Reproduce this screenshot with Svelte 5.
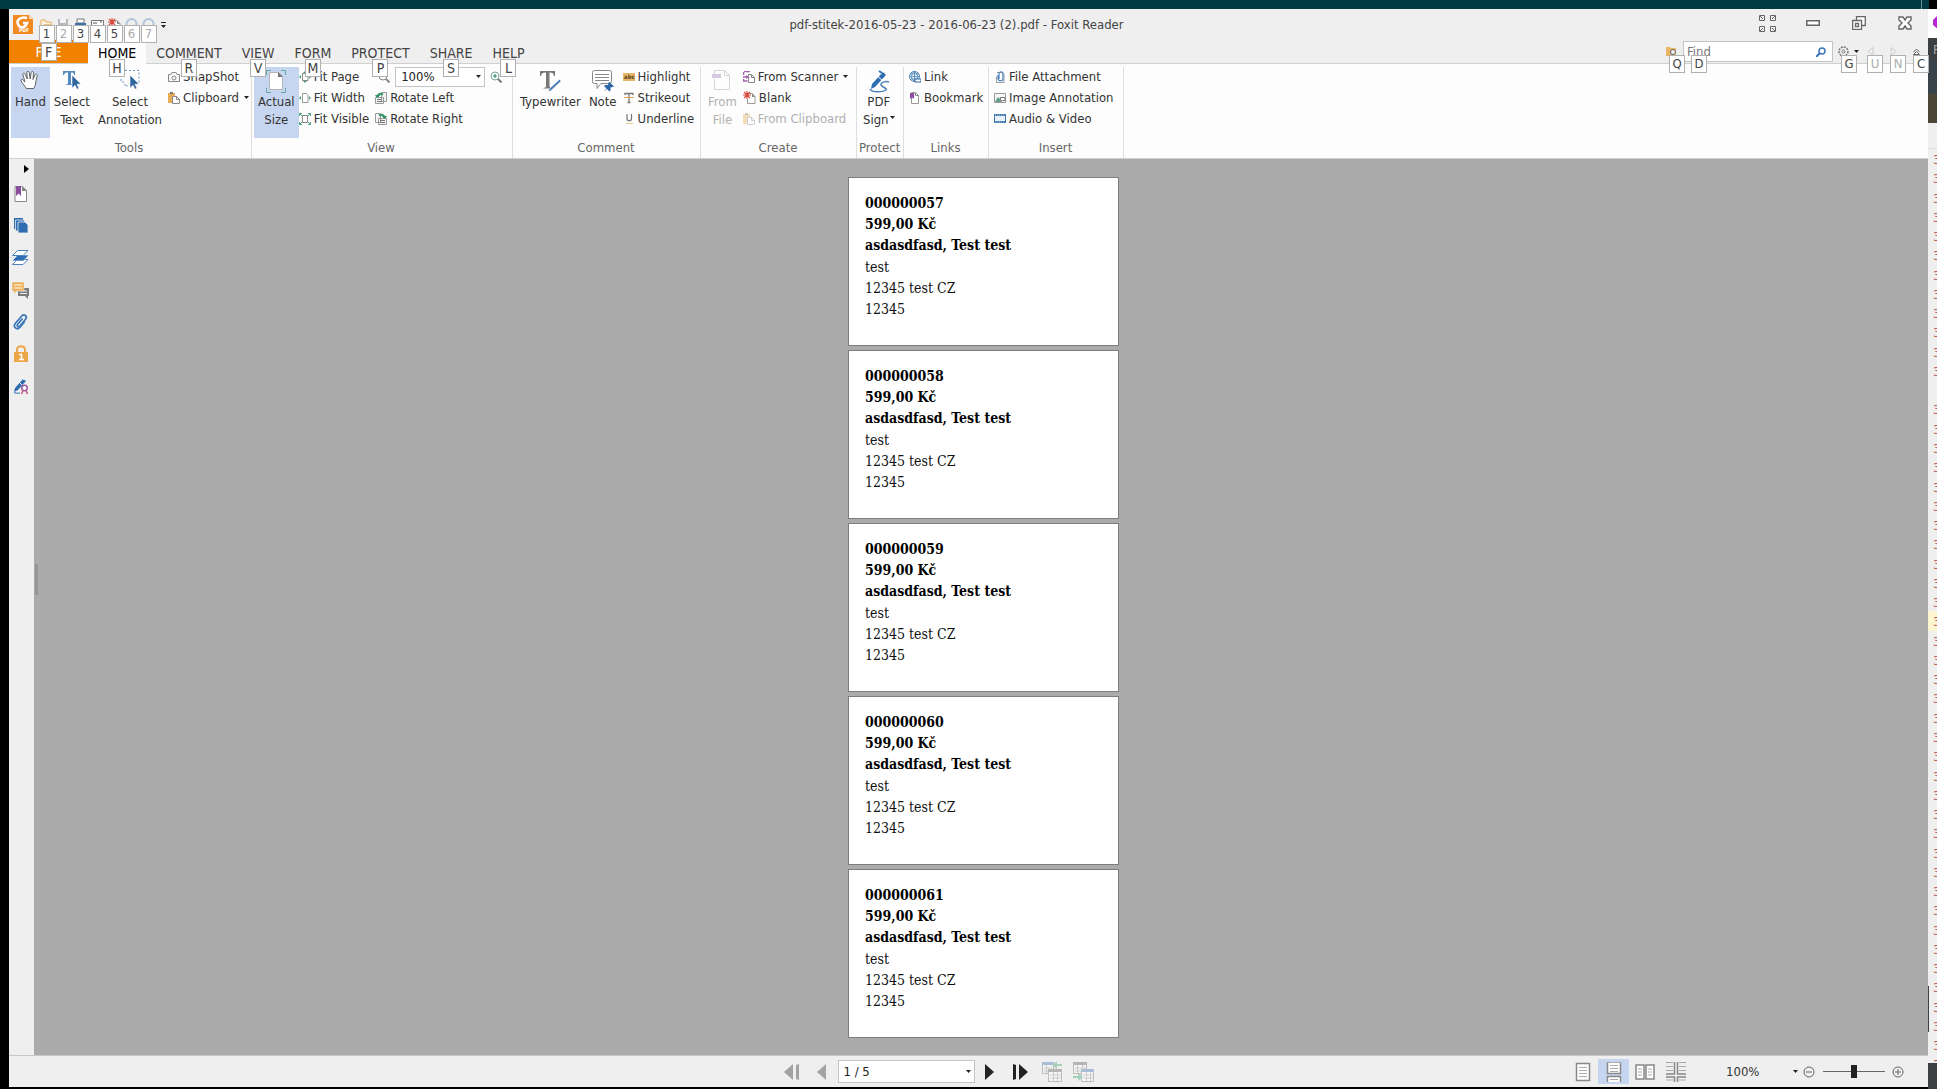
<script lang="ts">
    let zoom = $state(40);
    let query = $state('');

    const tabs = [
        { label: 'HOME', key: 'H' },
        { label: 'COMMENT', key: 'R' },
        { label: 'VIEW', key: 'V' },
        { label: 'FORM', key: 'M' },
        { label: 'PROTECT', key: 'P' },
        { label: 'SHARE', key: 'S' },
        { label: 'HELP', key: 'L' }
    ];

    const quick = [
        { icon: 'open', label: 'Open', key: '1', off: false },
        { icon: 'save', label: 'Save', key: '2', off: true },
        { icon: 'print', label: 'Print', key: '3', off: false },
        { icon: 'mail', label: 'Email', key: '4', off: false },
        { icon: 'new', label: 'New', key: '5', off: false },
        { icon: 'undo', label: 'Undo', key: '6', off: true },
        { icon: 'redo', label: 'Redo', key: '7', off: true }
    ];

    const panels = ['bookmarks', 'pages', 'layers', 'comments', 'attachments', 'security', 'signatures'];
    const views = ['single', 'continuous', 'facing', 'spread'];
    const labels = ['000000057', '000000058', '000000059', '000000060', '000000061'];

    // line numbers of the editor behind the window, row 12 is folded
    const lines = Array.from({ length: 48 }, (_, i) => (i === 12 ? '' : '3'));
</script>

{#snippet tip(key: string, off = false)}
    <span class="tip" class:off>{key}</span>
{/snippet}

{#snippet caret()}
    <svg class="caret" width="5" height="3" viewBox="0 0 5 3"><path d="M0 0h5L2.500 3z" fill="#222" /></svg>
{/snippet}

{#snippet icon(name: string)}
    {#if name === 'open'}
        <svg width="13" height="13" viewBox="0 0 13 13"><path d="M1 12V2h4l1 2h5v3" fill="#fdf3df" stroke="#e3ad55" /><path d="M1 12l3-6h8l-2 6z" fill="#efc27a" /></svg>
    {:else if name === 'save'}
        <svg width="13" height="13" viewBox="0 0 13 13"><path d="M1 1h10v11H1z" fill="#b9b6bf" /><path d="M3 1h6v4H3z" fill="#f4f4f4" /><path d="M3 8h6v4H3z" fill="#ddd" /></svg>
    {:else if name === 'print'}
        <svg width="13" height="13" viewBox="0 0 13 13"><path d="M3 1h7v4H3z" fill="#fff" stroke="#777" /><path d="M1 5h11v5H1z" fill="#3c72aa" /><path d="M3 8h7v4H3z" fill="#fff" /></svg>
    {:else if name === 'mail'}
        <svg width="13" height="13" viewBox="0 0 13 13"><path d="M.5 2.500h12v8H.5z" fill="#fff" stroke="#777" /><path d="M2 5h4M9 4h2" stroke="#555" /></svg>
    {:else if name === 'new' || name === 'blank'}
        <svg width="13" height="13" viewBox="0 0 13 13"><path d="M5 2.500h4l3 3v7H4.500V8" fill="#fff" stroke="#999" /><path d="M9 2v4h3z" fill="#888" /><path d="M4 0v8M0 4h8M1 1l6 6M7 1L1 7" stroke="#d5493c" stroke-width="1.200" /></svg>
    {:else if name === 'undo' || name === 'redo'}
        <svg width="13" height="13" viewBox="0 0 13 13"><path d="M1.500 9V6a5 5 0 0 1 10 0v3" fill="none" stroke="#b2c5db" stroke-width="2" /></svg>
    {:else if name === 'hand'}
        <svg width="20" height="20" viewBox="0 0 20 20"><path d="M6.500 18.500C5 16 1.500 12.500 1 10.500c0-1.600 1.800-1.400 3.200.8L5 12 3 5c-.4-2 1.600-2.400 2.200-.6L7.300 9 6.800 2.700c0-1.900 2.200-1.900 2.500 0L10.200 9l1-6.500c.4-1.700 2.400-1.300 2.300.4L13 9.500l2-4.800c.8-1.500 2.500-.8 2.200.8L15.800 12c-.3 3-1 4.500-2 6.500z" fill="#fff" stroke="#555" stroke-width=".9" /></svg>
    {:else if name === 'select-text'}
        <svg width="20" height="20" viewBox="0 0 20 20"><path d="M1 1h12v4h-1c0-2-1-2.500-3-2.500V13c0 1 .5 1.300 2 1.400V15H4v-.6c1.500-.1 2-.4 2-1.400V2.500C3.500 2.500 2.500 3 2 5H1z" fill="#5589bf" /><path d="M10 5l9 9-4 .3 2 4-2 1-2-4-3 3z" fill="#2e659f" stroke="#fff" stroke-width=".6" /></svg>
    {:else if name === 'select-annot'}
        <svg width="20" height="20" viewBox="0 0 20 20"><path d="M1 .5h18v12M1 1v11h3l2 5 3-4" fill="none" stroke="#6c95bf" stroke-dasharray="2 2" /><path d="M10 5l9 9-4 .3 2 4-2 1-2-4-3 3z" fill="#2e659f" stroke="#fff" stroke-width=".6" /></svg>
    {:else if name === 'camera'}
        <svg width="12" height="12" viewBox="0 0 12 12"><path d="M.5 3.500H3l1-2h4l1 2h2.500v7H.5z" fill="#fafafa" stroke="#888" /><circle cx="6" cy="7" r="2" fill="none" stroke="#888" /></svg>
    {:else if name === 'clipboard' || name === 'from-clip'}
        <svg width="12" height="12" viewBox="0 0 12 12"><path d="M0 1h7v10H0z" fill="#e8ac58" /><path d="M2 0h3v2H2z" fill="#777" /><path d="M4.500 4.500h4l3 3v4h-7z" fill="#fff" stroke="#888" /><path d="M8.500 4v3.500H12" fill="none" stroke="#888" /></svg>
    {:else if name === 'actual-size'}
        <svg width="20" height="23" viewBox="0 0 20 23"><path d="M3.500 2.500h9l4 4v13h-13z" fill="#fff" stroke="#b5b5b5" /><path d="M12 2v5h5z" fill="#777" /><path d="M.5 5V.5H5M15 .5h4.500V5M.5 18v4.500H5M15 22.500h4.500V18" fill="none" stroke="#62a99d" /></svg>
    {:else if name === 'fit-page'}
        <svg width="12" height="12" viewBox="0 0 12 12"><path d="M3.500 2.500h4l1.500 2v5H3.500z" fill="#fff" stroke="#888" /><path d="M6 0l2 2H4zM6 12l2-2H4zM0 6l2-2v4zM12 6l-2-2v4z" fill="#4da283" /></svg>
    {:else if name === 'fit-width'}
        <svg width="12" height="12" viewBox="0 0 12 12"><path d="M3.500 1.500h4l1.500 2v7H3.500z" fill="#fff" stroke="#999" /><path d="M0 6l2-2v4zM12 6l-2-2v4z" fill="#4da283" /></svg>
    {:else if name === 'fit-visible'}
        <svg width="12" height="12" viewBox="0 0 12 12"><path d="M3.500 2.500h5v7h-5z" fill="#fff" stroke="#888" /><path d="M.5 3V.5H3M9 .5h2.500V3M.5 9v2.500H3M9 11.500h2.500V9M1 1l2 2M11 1L9 3M1 11l2-2M11 11L9 9" fill="none" stroke="#4da283" /></svg>
    {:else if name === 'rotate-left'}
        <svg width="12" height="12" viewBox="0 0 12 12"><path d="M6.500.5h5v9h-5zM.5 5.500h8v6h-8z" fill="#f4f4f4" stroke="#999" /><path d="M2 7.500h5M2 9.500h5" stroke="#777" /><path d="M2.500 5C2.500 2 5 1 8 2.500" fill="none" stroke="#329567" stroke-width="2" /><path d="M0 3h5.500L2 6z" fill="#329567" /></svg>
    {:else if name === 'rotate-right'}
        <svg width="12" height="12" viewBox="0 0 12 12"><path d="M.5.5h5v9h-5zM3.500 5.500h8v6h-8z" fill="#f4f4f4" stroke="#999" /><path d="M5 7.500h5M5 9.500h5" stroke="#777" /><path d="M9.500 5C9.500 2 7 1 4 2.500" fill="none" stroke="#329567" stroke-width="2" /><path d="M12 3H6.500L10 6z" fill="#329567" /></svg>
    {:else if name === 'zoom-out'}
        <svg width="12" height="12" viewBox="0 0 12 12"><circle cx="5" cy="5" r="4" fill="#fff" stroke="#888" /><path d="M8 8l3.500 3.500" stroke="#888" stroke-width="2" /></svg>
    {:else if name === 'zoom-in'}
        <svg width="12" height="12" viewBox="0 0 12 12"><circle cx="5" cy="5" r="4" fill="#fff" stroke="#75a796" /><path d="M5 3v4M3 5h4" stroke="#2f9068" stroke-width="1.200" /><path d="M8 8l3.500 3.500" stroke="#777" stroke-width="2" /></svg>
    {:else if name === 'typewriter'}
        <svg width="22" height="22" viewBox="0 0 22 22"><path d="M1 1h15v5h-1c-.3-2.400-1.300-3.500-4.500-3.500V16c0 1.400.6 1.700 2.500 1.800v.7H4.500v-.7c1.900-.1 2.500-.4 2.500-1.800V2.500C3.500 2.500 2.300 3.600 2 6H1z" fill="#777" /><path d="M20.500 9.500l1.500 1.500-10 9.500-2.500 1 .8-2.600z" fill="#3f76b4" stroke="#fff" stroke-width=".4" /></svg>
    {:else if name === 'note'}
        <svg width="22" height="22" viewBox="0 0 22 22"><path d="M2.500.5h15a2 2 0 0 1 2 2v9a2 2 0 0 1-2 2H9l-4 5v-5H2.500a2 2 0 0 1-2-2v-9a2 2 0 0 1 2-2z" fill="#fff" stroke="#888" /><path d="M3 4.500h14M3 7.500h14M3 10.500h14" stroke="#888" /><path d="M17 11.500l5 5-1.500.5-2 .5v3l-1 1-2.500-2.500-3 2.500 2.500-3-2.500-2.500 1-1h3z" fill="#2f68a8" /></svg>
    {:else if name === 'highlight'}
        <svg width="12" height="12" viewBox="0 0 12 12"><path d="M0 2h12v8H0z" fill="#e5b768" /><text x="1" y="8" font-size="6" font-weight="bold" fill="#5b4321">abc</text></svg>
    {:else if name === 'strikeout'}
        <svg width="12" height="12" viewBox="0 0 12 12"><path d="M2 3V1.500h8V3M6 1.500v9M4.500 10.500h3" fill="none" stroke="#777" stroke-width="1.300" /><path d="M1 5.500h10" stroke="#dfa556" /></svg>
    {:else if name === 'underline'}
        <svg width="12" height="12" viewBox="0 0 12 12"><path d="M4 1v4.500c0 3 4.500 3 4.500 0V1" fill="none" stroke="#777" stroke-width="1.200" /><path d="M3 10.500h7" stroke="#eac58e" /></svg>
    {:else if name === 'from-file'}
        <svg width="20" height="21" viewBox="0 0 20 21"><path d="M2.500 5V.5h10l5 5v14h-15V9" fill="#fff" stroke="#999" /><path d="M12.500.5v5h5" fill="none" stroke="#999" /><path d="M0 4h9v4H0z" fill="#a07bb8" /></svg>
    {:else if name === 'scanner'}
        <svg width="12" height="12" viewBox="0 0 12 12"><path d="M1 .5h6M.5 1v3M0 6h5M.5 8v2h4" fill="none" stroke="#a361ae" stroke-width="1.500" /><path d="M5.500 3.500h3l3 3v5h-6z" fill="#fff" stroke="#888" /><path d="M8.500 3.500v3h3" fill="none" stroke="#888" /><path d="M3 4l3 2-3 2z" fill="#a361ae" /></svg>
    {:else if name === 'sign'}
        <svg width="22" height="23" viewBox="0 0 22 23"><path d="M15 2l3 3L7 17l-4 2 1-5z" fill="#2f6db2" /><path d="M12 0l2 3M8 5l6 5" stroke="#fff" /><path d="M11 1l3 2" stroke="#2f6db2" stroke-width="2" /><path d="M2 19c2 4 13 3 16 1 2-2-6-3-5-6 .5-2 5-3 8-2" fill="none" stroke="#4c82bd" stroke-width="1.500" /></svg>
    {:else if name === 'link'}
        <svg width="12" height="12" viewBox="0 0 12 12"><circle cx="5.500" cy="5.500" r="5" fill="#f3f8fc" stroke="#4680b5" /><path d="M.5 5.500h10M1.500 3h8M1.500 8h8M5.500.5v10M5.500.5c-4 3-4 7 0 10M5.500.5c4 3 4 7 0 10" fill="none" stroke="#4680b5" stroke-width=".8" /><path d="M6 8h6v3H6z" fill="#fff" stroke="#2f68a8" /></svg>
    {:else if name === 'bookmark'}
        <svg width="12" height="12" viewBox="0 0 12 12"><path d="M2.500.5h4l3 3v8h-7z" fill="#fff" stroke="#999" /><path d="M6.500.5v3h3" fill="none" stroke="#888" /><path d="M1 1h4v6L3 5.500 1 7z" fill="#8e4ba3" /></svg>
    {:else if name === 'attach'}
        <svg width="12" height="12" viewBox="0 0 12 12"><path d="M3 1.500h5l2 2v8H2.500v-6" fill="#fff" stroke="#999" /><path d="M5 8V3c0-3 4-3 4 0v4.500c0 3-5 3-5 0V4" fill="none" stroke="#4b82bd" stroke-width="1.200" /></svg>
    {:else if name === 'image'}
        <svg width="12" height="12" viewBox="0 0 12 12"><path d="M.5 1.500h11v9H.5z" fill="#f6f6f6" stroke="#999" /><path d="M1 10l3-5 2 2 1 3z" fill="#5fa184" /><path d="M6.500 5.500H11v3H9l-1 1v-1H6.500z" fill="#fff" stroke="#777" /></svg>
    {:else if name === 'video'}
        <svg width="12" height="12" viewBox="0 0 12 12"><path d="M.5 1.500h11v8H.5z" fill="#e7eff8" stroke="#3f78b4" /><path d="M0 2h12M0 9h12" stroke="#3f78b4" stroke-width="2" /><path d="M1 2h10M1 9h10" stroke="#fff" stroke-width=".6" stroke-dasharray="1 1" /></svg>
    {:else if name === 'bookmarks'}
        <svg width="14" height="18" viewBox="0 0 14 18"><path d="M1 1.500h7l4.500 4v11H1z" fill="#fff" stroke="#888" /><path d="M8 1v5h5z" fill="#888" /><path d="M2 1h5v10L4.500 8.500 2 11z" fill="#8a4d9e" /></svg>
    {:else if name === 'pages'}
        <svg width="14" height="18" viewBox="0 0 14 18"><path d="M0 1h9v11H0z" fill="#2f6db2" /><path d="M1.500 3h9v11h-9z" fill="#2f6db2" stroke="#eee" stroke-width=".8" /><path d="M4 5h7l3 3v8H4z" fill="#2f6db2" stroke="#eee" stroke-width=".8" /></svg>
    {:else if name === 'layers'}
        <svg width="17" height="18" viewBox="0 0 17 18"><path d="M5.500 10.500H16L11 15.500H.5z" fill="#fff" stroke="#4c82bd" /><path d="M5.500 6H17l-5.500 6H0z" fill="#2f6db2" stroke="#fff" stroke-width=".6" /><path d="M5.500 1.500H16L11 6.500H.5z" fill="#fff" stroke="#4c82bd" /></svg>
    {:else if name === 'comments'}
        <svg width="17" height="18" viewBox="0 0 17 18"><path d="M6 7h11v8h-1v3l-3-3H6z" fill="#7b7b7b" /><path d="M8 10h7M8 12.500h7" stroke="#eee" /><path d="M0 1h12v9H5l-3 3v-3H0z" fill="#eeb155" stroke="#eee" stroke-width=".5" /><path d="M2 4h8M2 7h8" stroke="#fff" /></svg>
    {:else if name === 'attachments'}
        <svg width="15" height="18" viewBox="0 0 15 18"><path d="M9.500 5.500l-5 6c-1 1.600 1 3 2.200 1.700l6-7.200c2-3-1.700-5.500-4-3L2.200 10.500c-2.500 3.500 1.600 7 4.600 4l5-6" fill="none" stroke="#3a76b8" stroke-width="1.700" /></svg>
    {:else if name === 'security'}
        <svg width="14" height="18" viewBox="0 0 14 18"><path d="M3 8V5c0-5 8-5 8 0v3" fill="none" stroke="#eba64a" stroke-width="2" /><path d="M0 7h14v10H0z" fill="#eba64a" /><path d="M5 9.500h2.500V14M5 14.500h5" fill="none" stroke="#fff" stroke-width="1.500" /></svg>
    {:else if name === 'signatures'}
        <svg width="16" height="18" viewBox="0 0 16 18"><path d="M10 2l3 2-8 9-4 2 1-4z" fill="#2f6db2" /><path d="M9 0l2 3M6 5l4 4" stroke="#eee" /><path d="M1 15c1 2 4 1 6 1" fill="none" stroke="#2f6db2" /><circle cx="11.500" cy="11" r="2.700" fill="#fff" stroke="#9b559e" stroke-width="1.500" /><path d="M10 13.500L8.500 17M13 13.500l1.500 3.500" stroke="#c45d79" stroke-width="1.500" /></svg>
    {:else if name === 'single'}
        <svg width="16" height="20" viewBox="0 0 16 20"><path d="M1.500 1.500h13v17h-13z" fill="#fff" stroke="#888" stroke-width="1.500" /><path d="M4 5.500h8M4 8.500h8M4 11.500h8M4 14.500h8" stroke="#aaa" /></svg>
    {:else if name === 'continuous'}
        <svg width="16" height="20" viewBox="0 0 16 20"><path d="M1.500 0v11.500h13V0M1.500 20v-5.500h13V20" fill="#fff" stroke="#888" stroke-width="1.500" /><path d="M1 .5h14M4 3.500h8M4 6.500h8M4 9.500h8M4 17.500h8" stroke="#aaa" /></svg>
    {:else if name === 'facing'}
        <svg width="20" height="20" viewBox="0 0 20 20"><path d="M1 3h8v14H1zM11 3h8v14h-8z" fill="#fff" stroke="#888" stroke-width="1.500" /><path d="M3 7h4M3 10h4M3 13h4M13 7h4M13 10h4M13 13h4" stroke="#aaa" /></svg>
    {:else if name === 'spread'}
        <svg width="20" height="20" viewBox="0 0 20 20"><path d="M0 12h8.500V0M20 12h-8.500V0M0 15h8.500v5M20 15h-8.500v5" fill="none" stroke="#888" stroke-width="1.500" /><path d="M0 .5h7M13 .5h7M0 4.500h7M13 4.500h7M0 8.500h7M13 8.500h7M0 18h7M13 18h7" stroke="#aaa" /></svg>
    {/if}
{/snippet}

{#snippet small(name: string, label: string, drop = false, off = false)}
    <button class="small" disabled={off}>{@render icon(name)}<span>{label}</span>{#if drop}{@render caret()}{/if}</button>
{/snippet}

{#snippet big(name: string, first: string, second = '', on = false, off = false, drop = false)}
    <button class="big" class:on disabled={off}>
        <span class="pic">{@render icon(name)}</span>
        <span>{first}</span>
        {#if second}<span class="second">{second}{#if drop}{@render caret()}{/if}</span>{/if}
    </button>
{/snippet}

<div class="desktop">
    <div class="wallpaper"></div>
    <div class="stage">
        <main class="window">
            <header class="titlebar">
                <svg class="logo" width="21" height="21" viewBox="0 0 21 21">
                    <path d="M0 1h16l4 4v15H0z" fill="#f28a22" />
                    <path d="M16 0v5h5z" fill="#fbd9b2" />
                    <path d="M14 4C8 2 3 6 5 10c1 4 7 5 9-1h-4" fill="none" stroke="#fff" stroke-width="2.500" />
                    <text x="6" y="18" font-size="5" font-weight="bold" fill="#fff">PDF</text>
                </svg>
                <div class="quick">
                    {#each quick as item (item.key)}
                        <button aria-label={item.label}>{@render icon(item.icon)}{@render tip(item.key, item.off)}</button>
                    {/each}
                    <button class="more" aria-label="Customize toolbar">
                        <svg width="5" height="6" viewBox="0 0 5 6"><path d="M0 0h5v1H0zM0 3h5L2.500 6z" fill="#222" /></svg>
                    </button>
                </div>
                <h1>pdf-stitek-2016-05-23 - 2016-06-23 (2).pdf - Foxit Reader</h1>
                <div class="controls">
                    <button aria-label="Full screen">
                        <svg width="17" height="17" viewBox="0 0 17 17" fill="none" stroke="#666"><path d="M.5.5h5v5h-5zM11.500.5h5v5h-5zM.5 11.500h5v5h-5zM11.500 11.500h5v5h-5z" /><path d="M1 1l3 3M16 1l-3 3M1 16l3-3M16 16l-3-3" /></svg>
                    </button>
                    <button aria-label="Minimize">
                        <svg width="14" height="14" viewBox="0 0 14 14"><path d="M.75 4.750h12.500v4.500H.75z" fill="#fff" stroke="#666" stroke-width="1.500" /></svg>
                    </button>
                    <button aria-label="Restore">
                        <svg width="14" height="14" viewBox="0 0 14 14" fill="#fff" stroke="#666" stroke-width="1.300"><path d="M4.500.7h8.800v8.800H4.500z" /><path d="M.7 4.500h8.800v8.800H.7zM3.500 7.500h3v3h-3z" /></svg>
                    </button>
                    <button aria-label="Close">
                        <svg width="14" height="14" viewBox="0 0 14 14"><path d="M1 1h4l2 3 2-3h4v3l-3 3 3 3v3H9l-2-3-2 3H1v-3l3-3-3-3z" fill="#fff" stroke="#666" stroke-width="1.400" /></svg>
                    </button>
                </div>
            </header>

            <nav class="tabs">
                <button class="file">FILE{@render tip('F')}</button>
                {#each tabs as tab, i (tab.key)}
                    <button class="tab" class:active={i === 0}>{tab.label}{@render tip(tab.key)}</button>
                {/each}
                <div class="search">
                    <button class="folder" aria-label="Search in folder">
                        <svg width="11" height="11" viewBox="0 0 11 11"><path d="M0 1h4l1 1h5v8H0z" fill="#e9b666" /><circle cx="7" cy="6" r="2.500" fill="#eee" stroke="#666" /></svg>
                        {@render tip('Q')}
                    </button>
                    <label class="find">
                        <input type="text" placeholder="Find" aria-label="Find" bind:value={query} />
                        <svg width="10" height="10" viewBox="0 0 10 10"><circle cx="6" cy="4" r="3" fill="#fff" stroke="#3b76bd" stroke-width="1.500" /><path d="M4 6L0 10" stroke="#3b76bd" stroke-width="2" /></svg>
                        {@render tip('D')}
                    </label>
                    <button class="gear" aria-label="Settings">
                        <svg width="11" height="11" viewBox="0 0 11 11" fill="none" stroke="#777"><circle cx="5.500" cy="5.500" r="4.500" stroke-dasharray="2 1" stroke-width="1.500" /><circle cx="5.500" cy="5.500" r="1.500" /></svg>
                        {@render caret()}
                        {@render tip('G')}
                    </button>
                    <button class="step" aria-label="Previous"><svg width="7" height="9" viewBox="0 0 7 9"><path d="M6 .5v8L1 4.500z" fill="none" stroke="#ccc" /></svg>{@render tip('U', true)}</button>
                    <button class="step" aria-label="Next"><svg width="7" height="9" viewBox="0 0 7 9"><path d="M1 .5v8l5-4z" fill="none" stroke="#ccc" /></svg>{@render tip('N', true)}</button>
                    <button class="step" aria-label="Collapse ribbon"><svg width="7" height="8" viewBox="0 0 7 8"><path d="M.5 4l3-3 3 3M.5 6.500l3-3 3 3z" fill="none" stroke="#666" /></svg>{@render tip('C')}</button>
                </div>
            </nav>

            <section class="ribbon">
                <div class="group tools">
                    <div class="items">
                        {@render big('hand', 'Hand', '', true)}
                        {@render big('select-text', 'Select', 'Text')}
                        {@render big('select-annot', 'Select', 'Annotation')}
                        <div class="col">
                            {@render small('camera', 'SnapShot')}
                            {@render small('clipboard', 'Clipboard', true)}
                        </div>
                    </div>
                    <h2>Tools</h2>
                </div>
                <div class="group view">
                    <div class="items">
                        {@render big('actual-size', 'Actual', 'Size', true)}
                        <div class="col">
                            {@render small('fit-page', 'Fit Page')}
                            {@render small('fit-width', 'Fit Width')}
                            {@render small('fit-visible', 'Fit Visible')}
                        </div>
                        <div class="col wide">
                            <div class="zoomline">
                                <button aria-label="Zoom out">{@render icon('zoom-out')}</button>
                                <label class="combo">
                                    <select aria-label="Zoom level"><option>100%</option></select>
                                    {@render caret()}
                                </label>
                                <button aria-label="Zoom in">{@render icon('zoom-in')}</button>
                            </div>
                            {@render small('rotate-left', 'Rotate Left')}
                            {@render small('rotate-right', 'Rotate Right')}
                        </div>
                    </div>
                    <h2>View</h2>
                </div>
                <div class="group comment">
                    <div class="items">
                        {@render big('typewriter', 'Typewriter')}
                        {@render big('note', 'Note')}
                        <div class="col">
                            {@render small('highlight', 'Highlight')}
                            {@render small('strikeout', 'Strikeout')}
                            {@render small('underline', 'Underline')}
                        </div>
                    </div>
                    <h2>Comment</h2>
                </div>
                <div class="group create">
                    <div class="items">
                        {@render big('from-file', 'From', 'File', false, true)}
                        <div class="col">
                            {@render small('scanner', 'From Scanner', true)}
                            {@render small('blank', 'Blank')}
                            {@render small('from-clip', 'From Clipboard', false, true)}
                        </div>
                    </div>
                    <h2>Create</h2>
                </div>
                <div class="group protect">
                    <div class="items">
                        {@render big('sign', 'PDF', 'Sign', false, false, true)}
                    </div>
                    <h2>Protect</h2>
                </div>
                <div class="group links">
                    <div class="items">
                        <div class="col">
                            {@render small('link', 'Link')}
                            {@render small('bookmark', 'Bookmark')}
                        </div>
                    </div>
                    <h2>Links</h2>
                </div>
                <div class="group insert">
                    <div class="items">
                        <div class="col">
                            {@render small('attach', 'File Attachment')}
                            {@render small('image', 'Image Annotation')}
                            {@render small('video', 'Audio & Video')}
                        </div>
                    </div>
                    <h2>Insert</h2>
                </div>
            </section>

            <div class="body">
                <aside class="rail">
                    <button class="expand" aria-label="Expand panel">
                        <svg width="5" height="8" viewBox="0 0 5 8"><path d="M0 0l5 4-5 4z" fill="#000" /></svg>
                    </button>
                    {#each panels as panel (panel)}
                        <button aria-label={panel}>{@render icon(panel)}</button>
                    {/each}
                </aside>
                <div class="splitter"><span></span></div>
                <div class="pages">
                    {#each labels as number (number)}
                        <article class="page">
                            <div class="strong">
                                <p>{number}</p>
                                <p>599,00 Kč</p>
                                <p>asdasdfasd, Test test</p>
                            </div>
                            <p>test</p>
                            <p>12345 test CZ</p>
                            <p>12345</p>
                        </article>
                    {/each}
                </div>
            </div>

            <footer class="status">
                <div class="pager">
                    <button aria-label="First page"><svg width="16" height="16" viewBox="0 0 16 16" fill="#a3a3a3"><path d="M9 0v16L0 8zM12 1l3-1v16l-3-1z" /></svg></button>
                    <button class="prev" aria-label="Previous page"><svg width="9" height="16" viewBox="0 0 9 16" fill="#a3a3a3"><path d="M9 0v16L0 8z" /></svg></button>
                    <label class="combo">
                        <select aria-label="Page"><option>1 / 5</option></select>
                        {@render caret()}
                    </label>
                    <button class="next" aria-label="Next page"><svg width="9" height="16" viewBox="0 0 9 16" fill="#222"><path d="M0 0v16l9-8z" /></svg></button>
                    <button class="last" aria-label="Last page"><svg width="16" height="16" viewBox="0 0 16 16" fill="#222"><path d="M7 0v16l9-8zM1 0l3 1v14l-3 1z" /></svg></button>
                    <button class="jump" aria-label="Previous view">
                        <svg width="21" height="21" viewBox="0 0 21 21"><path d="M.5 1.500h11v11H.5z" fill="#f3f3f3" stroke="#bbb" /><path d="M0 1h12v3H0z" fill="#a9bed6" /><path d="M2 7h8M2 10h8M4.500 4v8" stroke="#ccc" /><path d="M6.500 8.500h13v12h-13z" fill="#f6f6f6" stroke="#bbb" /><path d="M6 8h14v3H6z" fill="#b5b5b5" /><path d="M8 14h11M8 17h11M11.500 11v9M15.500 11v9" stroke="#ccc" /><path d="M10 4l5-4v3h5v2h-5v3z" fill="#a8d1bb" /></svg>
                    </button>
                    <button class="jump" aria-label="Next view">
                        <svg width="21" height="21" viewBox="0 0 21 21"><path d="M.5 1.500h13v11H.5z" fill="#f3f3f3" stroke="#bbb" /><path d="M0 1h14v3H0z" fill="#b5b5b5" /><path d="M2 7h11M2 10h11M4.500 4v8M9.500 4v8" stroke="#ccc" /><path d="M8.500 8.500h12v12h-12z" fill="#f6f6f6" stroke="#bbb" /><path d="M8 8h13v3H8z" fill="#a9bed6" /><path d="M10 14h10M10 17h10M13.500 11v9M17.500 11v9" stroke="#ccc" /><path d="M10 16l-5-4v3H0v2h5v3z" fill="#a8d1bb" /></svg>
                    </button>
                </div>
                <div class="viewing">
                    {#each views as view, i (view)}
                        <button class="mode" class:on={i === 1} aria-label={view}>{@render icon(view)}</button>
                    {/each}
                    <button class="percent">100%{@render caret()}</button>
                    <button class="round" aria-label="Smaller"><svg width="12" height="12" viewBox="0 0 12 12" fill="none" stroke="#666"><circle cx="6" cy="6" r="5" /><path d="M3 6h6" /></svg></button>
                    <input type="range" aria-label="Zoom" min="0" max="80" bind:value={zoom} />
                    <button class="round" aria-label="Larger"><svg width="12" height="12" viewBox="0 0 12 12" fill="none" stroke="#666"><circle cx="6" cy="6" r="5" /><path d="M3 6h6M6 3v6" /></svg></button>
                </div>
            </footer>
        </main>

        <aside class="behind">
            <div class="brand"><svg width="12" height="14" viewBox="0 0 12 14"><path d="M0 5l5-5h7v14H5L0 10z" fill="#b42ad0" /><path d="M4 4h8v7H4z" fill="#26134a" /></svg></div>
            <div class="menu">F</div>
            <div class="shade"></div>
            <div class="olive"></div>
            <div class="blank"></div>
            <div class="code">
                {#each lines as line, i}
                    <div class="line" class:current={i === 24}>{line}</div>
                {/each}
            </div>
            <div class="bottom"></div>
            <div class="thumb"></div>
        </aside>
    </div>
</div>

<style>
    :global(body) {
        background: #000;
    }

    .desktop {
        display: flex;
        flex-direction: column;
        height: 100vh;
        overflow: hidden;
        font-family: 'DejaVu Sans Condensed', 'DejaVu Sans', sans-serif;
        font-size: 13px;
        color: #333;
    }

    .desktop * {
        box-sizing: border-box;
    }

    button {
        display: flex;
        align-items: center;
        padding: 0;
        border: 0;
        background: none;
        font: inherit;
        color: inherit;
        white-space: nowrap;
    }

    svg {
        flex: none;
        display: block;
    }

    h1, h2, p {
        margin: 0;
        font-size: inherit;
        font-weight: normal;
    }

    .wallpaper {
        flex: none;
        height: 9px;
        margin-right: 8px;
        background: #003b44;
        border-right: 7px solid #003b44;
        box-shadow: inset -1px 0 #6f9297;
    }

    .stage {
        flex: 1;
        display: flex;
        min-height: 0;
    }

    .window {
        flex: 1;
        display: flex;
        flex-direction: column;
        min-width: 0;
        margin: 0 0 2px 9px;
        background: #efefef;
    }

    .tip {
        position: absolute;
        top: 19px;
        left: 50%;
        z-index: 2;
        width: 16px;
        margin-left: -8px;
        border: 1px solid #b0b0b0;
        background: #fff;
        color: #444;
        text-align: center;
        line-height: 16px;
    }

    .tip.off {
        color: #aaa;
    }

    .titlebar {
        display: flex;
        height: 31px;
    }

    .logo {
        margin: 5px 4px 0;
    }

    .quick {
        display: flex;
        width: 131px;
    }

    .quick button {
        position: relative;
        flex: none;
        justify-content: center;
        align-items: flex-start;
        width: 17px;
        padding-top: 9px;
    }

    .quick .tip {
        top: 16px;
    }

    .quick .more {
        width: 12px;
        padding-top: 13px;
    }

    .titlebar h1 {
        flex: 1;
        color: #444;
        text-align: center;
        line-height: 32px;
    }

    .controls {
        display: flex;
    }

    .controls button {
        justify-content: center;
        width: 46px;
        height: 28px;
    }

    .tabs {
        display: flex;
        height: 24px;
        border-bottom: 1px solid #d0d0d0;
    }

    .tab {
        position: relative;
        height: 24px;
        padding: 2px 10px 0;
        font-size: 14px;
        color: #444;
    }

    .tab.active {
        background: #fcfcfc;
        color: #000;
    }

    .file {
        position: relative;
        justify-content: center;
        width: 79px;
        height: 23px;
        background: #f08200;
        color: #fff;
        font-size: 14px;
    }

    .file .tip {
        top: 3px;
    }

    .search {
        display: flex;
        margin-left: auto;
    }

    .search button {
        position: relative;
        justify-content: center;
    }

    .search .tip {
        top: 15px;
    }

    .search .folder {
        width: 23px;
        justify-content: flex-start;
        padding-left: 6px;
    }

    .folder .tip {
        left: 17px;
    }

    .find {
        position: relative;
        display: flex;
        align-items: center;
        width: 150px;
        height: 21px;
        margin-top: 1px;
        padding-right: 6px;
        border: 1px solid #c4c4c4;
        background: #fff;
    }

    .find input {
        flex: 1;
        min-width: 0;
        padding: 0 3px;
        border: 0;
        outline: 0;
        background: none;
        font: inherit;
    }

    .find input::placeholder {
        color: #777;
        opacity: 1;
    }

    .find .tip {
        top: 13px;
        left: 15px;
    }

    .search .gear {
        justify-content: flex-end;
        gap: 5px;
        width: 26px;
    }

    .search .step {
        width: 23px;
    }

    .gear .tip,
    .step .tip {
        left: 16px;
    }

    .ribbon {
        display: flex;
        height: 95px;
        padding-top: 3px;
        border-bottom: 1px solid #d0d0d0;
        background: #fdfdfd;
    }

    .group {
        display: flex;
        flex-direction: column;
        height: 91px;
        border-right: 1px solid #dedede;
    }

    .group h2 {
        margin-right: 4px;
        color: #666;
        text-align: center;
        line-height: 20px;
    }

    .items {
        display: flex;
        height: 71px;
    }

    .tools {
        width: 243px;
        padding-left: 2px;
    }

    .view {
        width: 261px;
        padding-left: 2px;
    }

    .comment {
        width: 188px;
        padding-left: 3px;
    }

    .create {
        width: 156px;
        padding-left: 3px;
    }

    .protect {
        width: 47px;
        padding-left: 2px;
    }

    .links {
        width: 85px;
        padding-left: 3px;
    }

    .insert {
        width: 135px;
        padding-left: 3px;
    }

    .big {
        flex-direction: column;
        padding: 0 4px;
        line-height: 18px;
    }

    .big.on {
        background: #c7d6f0;
    }

    .pic {
        display: flex;
        justify-content: center;
        height: 26px;
        padding-top: 3px;
    }

    .second {
        display: flex;
        gap: 1px;
    }

    .second .caret {
        margin-top: 5px;
    }

    .col {
        display: flex;
        flex-direction: column;
        margin: -1px 0 0 2px;
    }

    .view .col {
        margin-left: 0;
    }

    .view .wide {
        margin-left: 6px;
    }

    .small {
        gap: 3px;
        height: 21px;
    }

    .small .caret {
        margin-left: 2px;
    }

    button:disabled {
        color: #b0b0b0;
    }

    button:disabled svg {
        opacity: 0.4;
    }

    .zoomline {
        display: flex;
        align-items: center;
        gap: 5px;
        height: 21px;
        padding-left: 3px;
    }

    .combo {
        display: flex;
        align-items: center;
        width: 90px;
        height: 20px;
        padding-right: 3px;
        border: 1px solid #c4c4c4;
        background: #fff;
    }

    .combo select {
        flex: 1;
        min-width: 0;
        padding: 0 5px;
        border: 0;
        outline: 0;
        appearance: none;
        background: none;
        font: inherit;
        color: #222;
    }

    .body {
        flex: 1;
        display: flex;
        min-height: 0;
        background: #ababab;
    }

    .rail {
        display: flex;
        flex-direction: column;
        width: 25px;
        background: #efefef;
    }

    .rail button {
        justify-content: center;
        width: 23px;
        height: 32px;
    }

    .rail .expand {
        justify-content: flex-end;
        width: 20px;
        height: 19px;
    }

    .splitter {
        display: flex;
        align-items: center;
        width: 5px;
    }

    .splitter span {
        width: 3px;
        height: 31px;
        margin: 0 0 55px 1px;
        background: #979797;
    }

    .pages {
        flex: 1;
        display: flex;
        flex-direction: column;
        align-items: center;
        gap: 4px;
        padding-top: 18px;
        overflow: hidden;
    }

    .page {
        flex: none;
        width: 271px;
        height: 169px;
        padding: 15px 16px;
        border: 1px solid #7d7d7d;
        background: #fff;
        color: #111;
        font-family: 'DejaVu Serif Condensed', 'DejaVu Serif', serif;
        font-size: 14px;
        line-height: 21px;
    }

    .strong {
        margin-bottom: 1px;
        color: #000;
    }

    .strong p {
        font-weight: bold;
    }

    .status {
        display: grid;
        grid-template-columns: 1fr auto 1fr;
        align-items: center;
        height: 32px;
        border-top: 1px solid #c8c8c8;
    }

    .pager {
        grid-column: 2;
        display: flex;
        align-items: center;
        padding-right: 60px;
    }

    .prev {
        margin: 0 12px 0 17px;
    }

    .pager .combo {
        width: 137px;
        height: 23px;
    }

    .next {
        margin: 0 18px 0 10px;
    }

    .last {
        margin-right: 4px;
    }

    .jump {
        margin-left: 10px;
    }

    .viewing {
        display: flex;
        align-items: center;
        justify-content: flex-end;
        padding-right: 24px;
    }

    .mode {
        justify-content: center;
        width: 31px;
        height: 25px;
    }

    .mode.on {
        background: #c7d6f0;
    }

    .percent {
        justify-content: space-between;
        width: 72px;
        margin: 0 5px 0 35px;
    }

    input[type='range'] {
        width: 62px;
        height: 14px;
        margin: 0 7px 0 8px;
        appearance: none;
        background: linear-gradient(#666, #666) center / 100% 1px no-repeat;
    }

    input[type='range']::-webkit-slider-thumb {
        appearance: none;
        width: 6px;
        height: 13px;
        background: #222;
    }

    .behind {
        position: relative;
        flex: none;
        display: flex;
        flex-direction: column;
        width: 9px;
        overflow: hidden;
        background: #efefef;
    }

    .brand {
        height: 29px;
        padding: 6px 0 0 5px;
        background: #fff;
    }

    .menu {
        height: 24px;
        padding-left: 5px;
        background: #3c4043;
        color: #aaa;
        line-height: 24px;
    }

    .shade {
        height: 32px;
        background: #38424a;
    }

    .olive {
        height: 29px;
        background: #4a4738;
    }

    .blank {
        height: 26px;
        border-bottom: 1px solid #ddd;
    }

    .code {
        flex: 1;
        display: flex;
        flex-direction: column;
        min-height: 0;
        margin-bottom: -11px;
        color: #c0605c;
    }

    .line {
        flex: 1;
        min-height: 0;
        padding-left: 5px;
        line-height: 22px;
    }

    .line.current {
        background: #fdf6d0;
    }

    .bottom {
        position: relative;
        height: 26px;
        background: #3c4043;
    }

    .thumb {
        position: absolute;
        bottom: 57px;
        left: 0;
        width: 1px;
        height: 46px;
        background: #3c4043;
    }
</style>
